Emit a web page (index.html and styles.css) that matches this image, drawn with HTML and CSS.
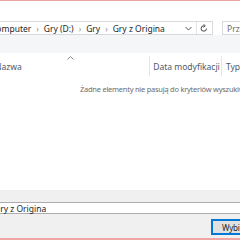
FILE: index.html
```html
<!DOCTYPE html>
<html lang="pl">
<head>
    <meta charset="UTF-8">
    <title>Wybierz folder</title>
    <link rel="stylesheet" href="styles.css">
</head>
<body>
<div class="window">
    <div class="titlebar"></div>
    <div class="address-row">
        <div class="path-box">
            <span class="crumb first">Computer</span>
            <span class="sep">›</span>
            <span class="crumb">Gry (D:)</span>
            <span class="sep">›</span>
            <span class="crumb">Gry</span>
            <span class="sep">›</span>
            <span class="crumb">Gry z Origina</span>
            <span class="spacer"></span>
            <svg class="dropdown" width="7" height="5" viewBox="0 0 7 5"><path d="M0.5 1 L3.5 4 L6.5 1" fill="none" stroke="#555" stroke-width="1"/></svg>
            <span class="divider"></span>
            <svg class="refresh" width="8" height="9" viewBox="0 0 8 9"><path d="M6.5 4.5 A2.7 2.7 0 1 1 4 1.8" fill="none" stroke="#444" stroke-width="1"/><path d="M3.5 0.2 L5.3 1.8 L3.5 3.4" fill="none" stroke="#444" stroke-width="1"/></svg>
        </div>
        <div class="search-box">Przeszukaj: Gry z Origina</div>
    </div>
    <div class="commandbar"></div>
    <div class="list">
        <div class="header">
            <div class="col col-name">
                <span>Nazwa</span>
                <svg class="sort" width="7" height="4" viewBox="0 0 7 4"><path d="M0.5 3.5 L3.5 0.5 L6.5 3.5" fill="none" stroke="#8a8a8a" stroke-width="1"/></svg>
            </div>
            <div class="col col-date">Data modyfikacji</div>
            <div class="col col-type">Typ</div>
        </div>
        <div class="empty">Żadne elementy nie pasują do kryteriów wyszukiwania.</div>
    </div>
    <div class="footer">
        <div class="folder-row">
            <div class="folder-input">Gry z Origina</div>
        </div>
        <div class="buttons">
            <div class="btn primary">Wybierz folder</div>
        </div>
    </div>
</div>
</body>
</html>
```

FILE: styles.css
```css
html, body {
    margin: 0;
    padding: 0;
}
body {
    width: 240px;
    height: 240px;
    overflow: hidden;
    font-family: "Noto Sans", "Open Sans", sans-serif;
    font-size: 8.5px;
    color: #1e1e1e;
    background: #ffffff;
}
.window {
    width: 240px;
    height: 240px;
    display: flex;
    flex-direction: column;
    border-top: 1px solid #f0a5a5;
    box-sizing: border-box;
    overflow: hidden;
}
.titlebar {
    height: 20px;
    background: #ffffff;
    flex-shrink: 0;
}
.address-row {
    display: flex;
    height: 14px;
    gap: 9px;
    flex-shrink: 0;
}
.path-box {
    display: flex;
    align-items: center;
    width: 225px;
    margin-left: -12px;
    box-sizing: border-box;
    border: 1px solid #d9d9d9;
    flex-shrink: 0;
    white-space: nowrap;
}
.crumb {
    padding: 0 2px;
}
.sep {
    color: #888;
    font-size: 8px;
    padding: 0 3px;
}
.spacer {
    flex: 1;
}
.dropdown {
    margin-right: 4px;
}
.divider {
    width: 1px;
    height: 12px;
    background: #e3e3e3;
}
.refresh {
    margin: 0 4px 0 3px;
}
.search-box {
    flex: 1;
    border: 1px solid #d9d9d9;
    border-right: none;
    padding-left: 4px;
    color: #6d6d6d;
    white-space: nowrap;
    overflow: hidden;
    display: flex;
    align-items: center;
}
.commandbar {
    height: 18px;
    background: #f5f6f7;
    flex-shrink: 0;
}
.list {
    flex: 1;
    background: #ffffff;
}
.header {
    display: flex;
    height: 20px;
    padding-top: 3px;
}
.col {
    display: flex;
    align-items: center;
    white-space: nowrap;
    color: #4d5a6a;
}
.col-name {
    position: relative;
    width: 155px;
    margin-left: -5px;
}
.sort {
    position: absolute;
    left: 72px;
    top: 0;
}
.col-date {
    width: 72px;
    border-left: 1px solid #e5e5e5;
    padding-left: 3px;
    box-sizing: border-box;
}
.col-type {
    border-left: 1px solid #e5e5e5;
    padding-left: 4px;
}
.empty {
    margin-top: 8px;
    padding-left: 80px;
    white-space: nowrap;
    color: #6d6d6d;
    font-size: 7.5px;
    letter-spacing: -0.25px;
}
.footer {
    height: 50px;
    background: #f0f0f0;
    border-bottom: 2px solid #f0a5a5;
    box-sizing: border-box;
    flex-shrink: 0;
}
.folder-row {
    padding-top: 12px;
}
.folder-input {
    height: 10px;
    margin-left: -11px;
    background: #ffffff;
    border: 1px solid #adadad;
    border-right: none;
    padding-left: 4px;
    display: flex;
    align-items: center;
}
.buttons {
    display: flex;
    padding: 5px 0 0 211px;
}
.btn {
    display: flex;
    align-items: center;
    height: 16px;
    width: 70px;
    box-sizing: border-box;
    padding-left: 10px;
    font-size: 8px;
    letter-spacing: -0.2px;
    background: #e1e1e1;
    border: 1px solid #adadad;
    white-space: nowrap;
    color: #1e1e1e;
    flex-shrink: 0;
}
.btn.primary {
    border: 1px solid #0078d7;
    box-shadow: inset 0 0 0 1px #0078d7;
}
```
